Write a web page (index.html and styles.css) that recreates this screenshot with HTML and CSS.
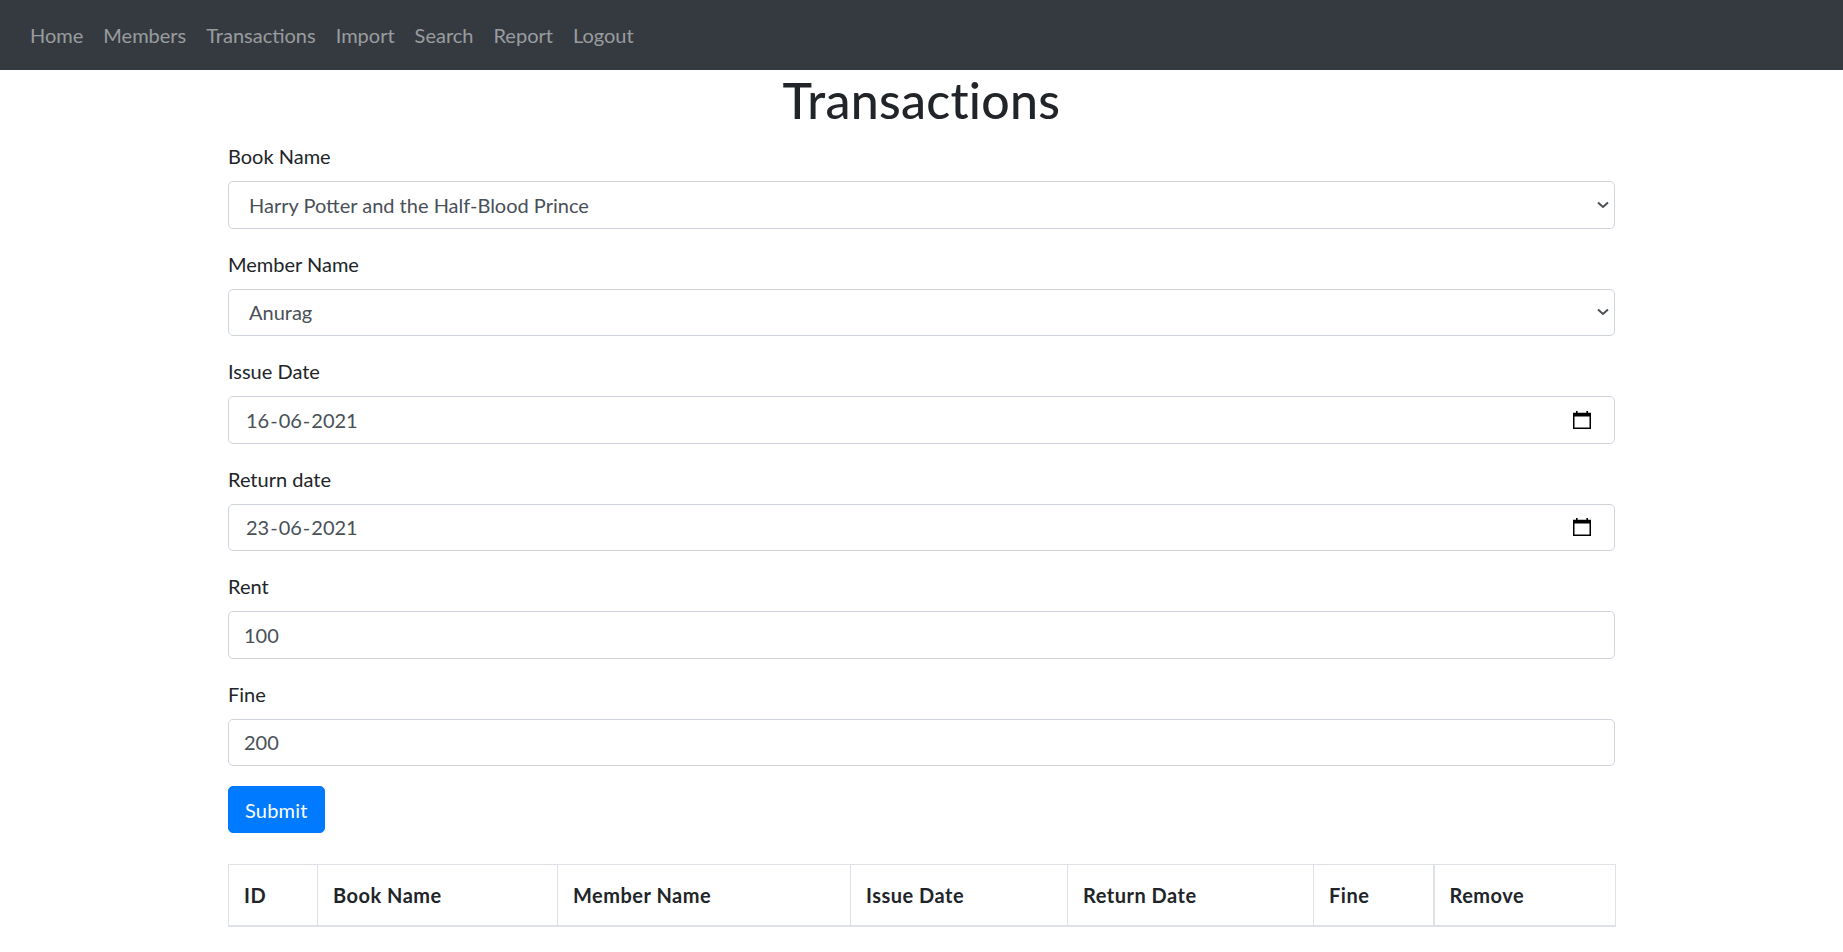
FILE: index.html
```html
<!DOCTYPE html>
<html lang="en">
<head>
<meta charset="utf-8">
<title>Transactions</title>
<link rel="stylesheet" href="styles.css">
</head>
<body>
<nav class="navbar">
  <ul class="nav-list">
    <li><a class="nav-link" href="#">Home</a></li>
    <li><a class="nav-link" href="#">Members</a></li>
    <li><a class="nav-link" href="#">Transactions</a></li>
    <li><a class="nav-link" href="#">Import</a></li>
    <li><a class="nav-link" href="#">Search</a></li>
    <li><a class="nav-link" href="#">Report</a></li>
    <li><a class="nav-link" href="#">Logout</a></li>
  </ul>
</nav>
<main class="container">
  <h1 class="page-title">Transactions</h1>
  <form class="tx-form">
    <div class="form-group">
      <label class="form-label">Book Name</label>
      <div class="form-control select-control">Harry Potter and the Half-Blood Prince</div>
    </div>
    <div class="form-group">
      <label class="form-label">Member Name</label>
      <div class="form-control select-control">Anurag</div>
    </div>
    <div class="form-group">
      <label class="form-label">Issue Date</label>
      <div class="form-control date-control">16<span class="sep">-</span>06<span class="sep">-</span>2021</div>
    </div>
    <div class="form-group">
      <label class="form-label">Return date</label>
      <div class="form-control date-control">23<span class="sep">-</span>06<span class="sep">-</span>2021</div>
    </div>
    <div class="form-group">
      <label class="form-label">Rent</label>
      <div class="form-control">100</div>
    </div>
    <div class="form-group">
      <label class="form-label">Fine</label>
      <div class="form-control">200</div>
    </div>
    <button type="button" class="btn-primary">Submit</button>
  </form>
  <table class="tx-table">
    <colgroup>
      <col class="c-id"><col class="c-book"><col class="c-member"><col class="c-issue"><col class="c-return"><col class="c-fine"><col class="c-remove">
    </colgroup>
    <thead>
      <tr>
        <th>ID</th>
        <th>Book Name</th>
        <th>Member Name</th>
        <th>Issue Date</th>
        <th>Return Date</th>
        <th>Fine</th>
        <th class="th-remove">Remove</th>
      </tr>
    </thead>
  </table>
</main>
</body>
</html>
```
FILE: styles.css
```css
* { box-sizing: border-box; }
html, body { margin: 0; padding: 0; }
body {
  font-family: "Lato", "Open Sans", "Liberation Sans", sans-serif;
  font-size: 20px;
  line-height: 30px;
  color: #212529;
  background: #fff;
}
.navbar {
  background: #343a40;
  padding: 10px 20px;
  display: flex;
  align-items: center;
}
.nav-list {
  list-style: none;
  margin: 0;
  padding: 0;
  display: flex;
}
.nav-link {
  display: block;
  padding: 10px;
  color: rgba(255,255,255,0.5);
  text-decoration: none;
  line-height: 30px;
}
.container {
  width: 1387px;
  margin: 0 auto;
}
.page-title {
  margin: 0 0 11px;
  font-size: 50px;
  line-height: 60px;
  font-weight: 500;
  letter-spacing: 0.3px;
  text-align: center;
}
.form-group { margin-bottom: 20px; }
.form-label {
  display: block;
  margin-bottom: 10px;
  line-height: 30px;
}
.form-control {
  height: 47.5px;
  padding: 7.5px 15px;
  border: 1px solid #ced4da;
  border-radius: 5px;
  color: #495057;
  line-height: 30px;
  background-color: #fff;
  background-repeat: no-repeat;
}
.select-control {
  padding-left: 20px;
  background-image: url("data:image/svg+xml,%3Csvg xmlns='http://www.w3.org/2000/svg' width='12' height='8' viewBox='0 0 12 8'%3E%3Cpath d='M1 1.5l5 4.5 5-4.5' fill='none' stroke='%23495057' stroke-width='2'/%3E%3C/svg%3E");
  background-position: right 5px center;
  background-size: 12px 8px;
}
.date-control {
  padding-left: 17px;
  background-image: url("data:image/svg+xml,%3Csvg xmlns='http://www.w3.org/2000/svg' width='20' height='20' viewBox='0 0 20 20'%3E%3Crect x='1.75' y='3.5' width='16.5' height='14.75' fill='none' stroke='%23000' stroke-width='1.5'/%3E%3Crect x='1' y='3' width='18' height='3.5' fill='%23000'/%3E%3Crect x='4' y='1' width='1.6' height='3' fill='%23000'/%3E%3Crect x='14.4' y='1' width='1.6' height='3' fill='%23000'/%3E%3C/svg%3E");
  background-position: right 22px center;
  background-size: 20px 20px;
}
.sep { padding: 0 1px; }
.btn-primary {
  display: inline-block;
  font-family: inherit;
  font-size: 20px;
  line-height: 30px;
  padding: 7.5px 16px;
  letter-spacing: 0.2px;
  color: #fff;
  background: #007bff;
  border: 1px solid #007bff;
  border-radius: 5px;
  cursor: pointer;
}
.tx-table {
  width: 100%;
  margin-top: 31px;
  border-collapse: collapse;
  table-layout: fixed;
  border: 1px solid #dee2e6;
}
.c-id { width: 89px; }
.c-book { width: 240px; }
.c-member { width: 293px; }
.c-issue { width: 217px; }
.c-return { width: 246px; }
.c-fine { width: 120px; }
.c-remove { width: 182px; }
.tx-table th {
  text-align: left;
  font-weight: 700;
  letter-spacing: 0.5px;
  padding: 15px;
  line-height: 30px;
  border: 1px solid #dee2e6;
  border-bottom: 2px solid #dee2e6;
  vertical-align: bottom;
}
.tx-table .th-remove { border-left: 2px solid #dee2e6; }
```
